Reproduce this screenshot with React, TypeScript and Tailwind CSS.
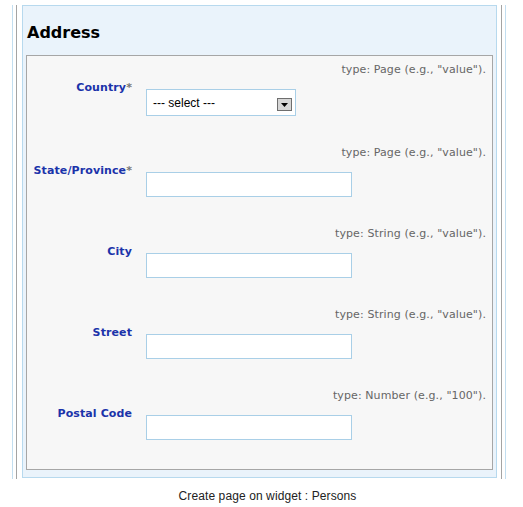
import React from "react";

type Row = { label: string; req?: boolean; hint: string; kind: "select" | "text" };

const rows: Row[] = [
  { label: "Country", req: true, hint: 'type: Page (e.g., "value").', kind: "select" },
  { label: "State/Province", req: true, hint: 'type: Page (e.g., "value").', kind: "text" },
  { label: "City", hint: 'type: String (e.g., "value").', kind: "text" },
  { label: "Street", hint: 'type: String (e.g., "value").', kind: "text" },
  { label: "Postal Code", hint: 'type: Number (e.g., "100").', kind: "text" },
];

function SelectBox() {
  return (
    <div className="flex h-[27px] w-[150px] items-center justify-between border border-[#a9cfe7] bg-white pl-[6px] pr-[3px] font-['Liberation_Sans',Arial,sans-serif] text-[12px] leading-[14px] text-black">
      <span>--- select ---</span>
      <span className="mt-[4px] flex h-[13px] w-[15px] items-center justify-center border border-[#6e6e6e] bg-[#d6d6d6]">
        <svg width="7" height="4" viewBox="0 0 7 4">
          <path d="M0 0 H7 L3.5 4 Z" fill="#000" />
        </svg>
      </span>
    </div>
  );
}

function TextBox() {
  return (
    <input
      type="text"
      className="block h-[25px] w-[206px] border border-[#a9cfe7] bg-white outline-none"
    />
  );
}

export default function App() {
  return (
    <div className="h-[507px] w-[523px] bg-white pt-[3px] font-['DejaVu_Sans',Verdana,sans-serif]">
      <div className="ml-[12px] w-[494px] border-x border-[#c2def0] px-[3px]">
        <div className="border-x border-[#a4a4a4] pb-[1px] pl-[5px] pr-[4px]">
          <div className="mt-[2px] border border-[#b7d9ee] bg-[#eaf3fb] px-[3px] pb-[7px]">
            <h2 className="pl-[1px] pt-[17px] text-[16px] font-bold leading-[20px] text-black">
              Address
            </h2>
            <div className="mt-[12px] flex flex-col gap-[30px] border border-[#a6a6a6] bg-[#f7f7f7] pb-[29px] pt-[7px]">
              {rows.map((r) => (
                <div key={r.label} className="flex">
                  <div className="w-[105px] shrink-0 pt-[18px] text-right text-[11px] font-bold leading-[14px] tracking-[0.1px] text-[#1b33aa]">
                    {r.label}
                    {r.req && <span className="text-[#777]">*</span>}
                  </div>
                  <div className="ml-[14px] w-[340px] shrink-0">
                    <div className="h-[14px] text-right text-[11px] leading-[14px] tracking-[0.1px] text-[#666]">
                      {r.hint}
                    </div>
                    <div className="mt-[12px]">
                      {r.kind === "select" ? <SelectBox /> : <TextBox />}
                    </div>
                  </div>
                </div>
              ))}
            </div>
          </div>
        </div>
      </div>
      <div className="mt-[10px] pl-[12px] text-center font-['Liberation_Sans',Arial,sans-serif] text-[12px] leading-[14px] tracking-[0.1px] text-[#222]">
        Create page on widget : Persons
      </div>
    </div>
  );
}
